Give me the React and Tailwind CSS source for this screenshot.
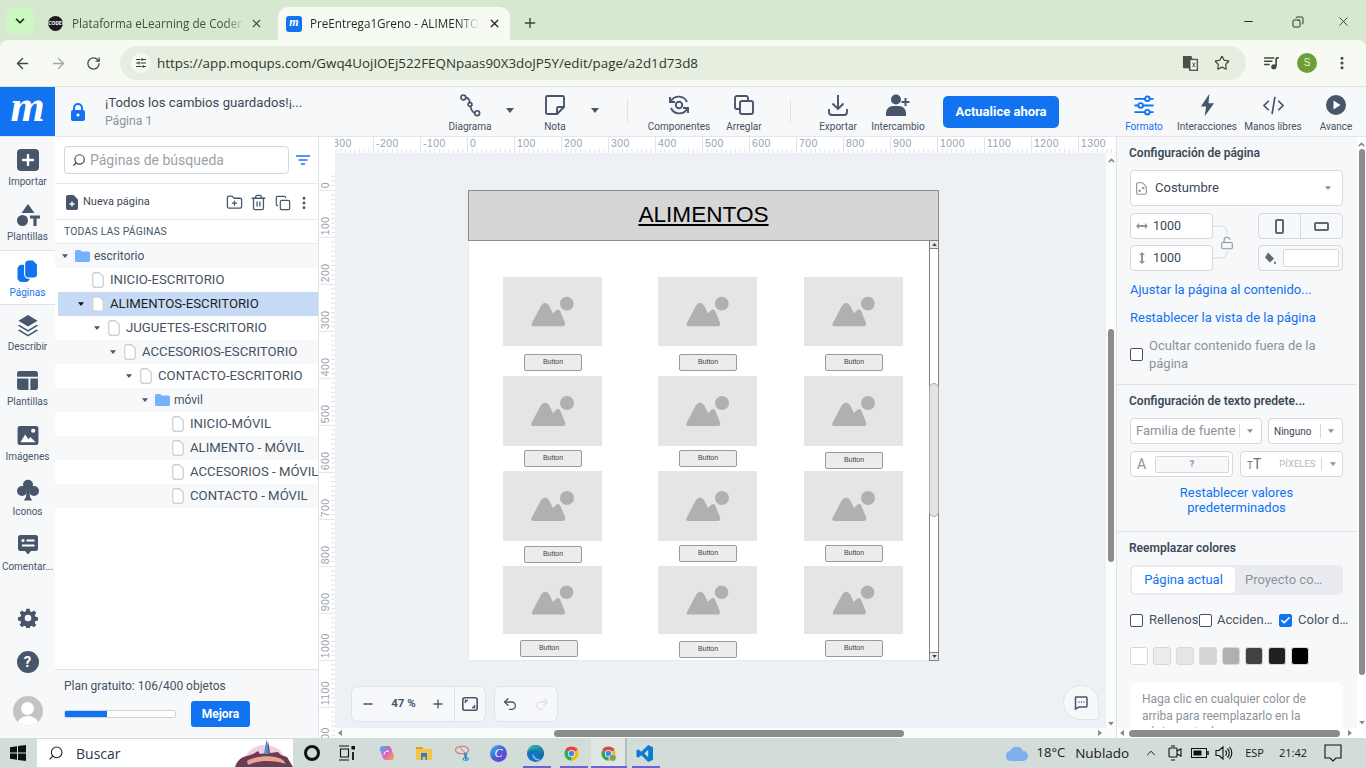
import React from 'react';
import { X, Plus, ArrowLeft, ArrowRight, RotateCw, Star, Minus, MoreVertical, ChevronDown, ChevronUp, Search, Trash2, Copy, FolderPlus, Undo2, Redo2, Check, SlidersHorizontal, LockOpen } from 'lucide-react';

const dark = '#47566a';

const Caret = ({ className = '', small }) => (
  <svg viewBox="0 0 8 5" className={`${small ? 'w-[6px] h-1' : 'w-2 h-[5px]'} ${className}`}><path d="M0 0h8L4 5z" fill="currentColor" /></svg>
);

const Mountains = () => (
  <svg viewBox="0 0 99 70" className="w-full h-full">
    <path d="M30 50q-3 0-1-4L38 29q4-5 8 0L50 37l3-3q2-2 4 0L62 46q1 4-2 4Z" fill="#b0b0b0" />
    <circle cx="64" cy="27" r="7" fill="#b0b0b0" />
  </svg>
);

const images = [
  [503, 277, 69], [658, 277, 69], [804, 277, 69],
  [503, 376, 70], [658, 376, 70], [804, 376, 70],
  [503, 471, 70], [658, 471, 70], [804, 471, 70],
  [503, 566, 68], [658, 566, 68], [804, 566, 68],
];
const buttons = [
  [524, 354], [679, 354], [825, 354],
  [524, 450], [679, 450], [825, 452],
  [524, 546], [679, 545], [825, 545],
  [520, 640], [679, 641], [825, 640],
];

const Wire = () => (
  <div className="relative w-[471px] h-[471px] ml-[133px] mt-[37px] bg-white shadow-[inset_0_0_0_1px_#e8eaee]">
    <div className="absolute left-0 top-0 w-[471px] h-[51px] bg-[#d6d6d6] border-y-[1.5px] border-x border-[#8c8c8c] flex items-center justify-center">
      <span className="text-[22.6px] leading-none text-black underline font-['Liberation_Sans',sans-serif]">ALIMENTOS</span>
    </div>
    {images.map(([x, y, h], i) => (
      <div key={i} className="absolute w-[99px] bg-[#e5e5e5]" style={{ left: x - 468, top: y - 190, height: h }}><Mountains /></div>
    ))}
    {buttons.map(([x, y], i) => (
      <div key={i} className="absolute w-[58px] h-[17px] bg-[#ececec] border-[1.5px] border-[#999] rounded-[2px] flex items-center justify-center text-[7px] text-[#444] font-['Liberation_Sans',sans-serif]" style={{ left: x - 468, top: y - 190 }}>Button</div>
    ))}
    <div className="absolute left-[461px] top-[50px] w-[10px] h-[421px] bg-white border-x-[1.5px] border-[#808080] flex flex-col items-center">
      <div className="w-[10px] h-[9px] bg-[#e9e9e9] border-[1.5px] border-[#808080] flex items-center justify-center shrink-0"><svg viewBox="0 0 6 4" className="w-[5px] h-[3px]"><path d="M3 0l3 4H0z" fill="#444" /></svg></div>
      <div className="w-[10px] h-[134px] mt-[134px] bg-[#e3e3e3] border border-[#aaa] rounded-[5px] shrink-0"></div>
      <div className="flex-1"></div>
      <div className="w-[10px] h-[9px] bg-[#e9e9e9] border-[1.5px] border-[#808080] flex items-center justify-center shrink-0"><svg viewBox="0 0 6 4" className="w-[5px] h-[3px]"><path d="M3 4L0 0h6z" fill="#444" /></svg></div>
    </div>
  </div>
);

const TopRuler = () => {
  const ticks = [];
  for (let u = -300; u <= 1400; u += 10) {
    const x = 132.6 + u * 0.47;
    if (u % 100 === 0) ticks.push(<path key={u} d={`M${x} 0V16`} stroke="#dfe3e8" />);
    else ticks.push(<path key={u} d={`M${x} 12V16`} stroke="#dfe3e8" />);
  }
  const labels = [];
  for (let u = -300; u <= 1300; u += 100) {
    labels.push(<text key={u} x={132.6 + u * 0.47 + 2.4} y="10" fontSize="10.5" letterSpacing="0.4" fill="#9aa3ad">{u}</text>);
  }
  return <svg width="781" height="16" className="block font-['Liberation_Sans',sans-serif]">{ticks}{labels}</svg>;
};

const LeftRuler = () => {
  const ticks = [];
  for (let u = -30; u <= 1300; u += 10) {
    const y = 37.3 + u * 0.47;
    if (u % 100 === 0) ticks.push(<path key={u} d={`M0 ${y}H16`} stroke="#dfe3e8" />);
    else ticks.push(<path key={u} d={`M12 ${y}H16`} stroke="#dfe3e8" />);
  }
  const labels = [];
  for (let u = 0; u <= 1200; u += 100) {
    const y = 37.3 + u * 0.47 - 2;
    labels.push(<text key={u} transform={`translate(10 ${y}) rotate(-90)`} fontSize="10.5" letterSpacing="0.4" fill="#9aa3ad">{u}</text>);
  }
  return <svg width="16" height="585" className="block font-['Liberation_Sans',sans-serif]">{ticks}{labels}</svg>;
};

const RailBtn = ({ label, active, children }) => (
  <div className={`w-[55px] h-[55px] flex flex-col items-center shrink-0 ${active ? 'bg-white border-y border-[#dfe3e8] w-[55px] relative z-10' : ''}`}>
    <div className="h-[30px] w-full flex items-center justify-center mt-[5px]">{children}</div>
    <span className={`text-[10px] leading-[13px] truncate w-[55px] text-center ${active ? 'text-[#1273f0]' : 'text-[#47566a]'}`}>{label}</span>
  </div>
);

const Rail = () => (
  <div className="w-[55px] shrink-0 bg-[#f6f8fa] border-r border-[#dfe3e8] flex flex-col pt-[3px] box-content -mr-px">
    <RailBtn label="Importar">
      <svg viewBox="0 0 22 22" className="w-[22px] h-[22px]"><rect width="22" height="22" rx="4" fill={dark} /><path d="M11 5v12M5 11h12" stroke="#fff" strokeWidth="2.4" /></svg>
    </RailBtn>
    <RailBtn label="Plantillas">
      <svg viewBox="0 0 24 24" className="w-6 h-6"><path d="M12 1l6.5 9h-13z" fill={dark} /><circle cx="6.5" cy="17.5" r="5.5" fill={dark} /><path d="M14 12.5h10v3h-3.4V23h-3.2v-7.5H14z" fill={dark} /></svg>
    </RailBtn>
    <RailBtn label="Páginas" active>
      <svg viewBox="0 0 22 24" className="w-[21px] h-[23px]"><rect x="0.5" y="5" width="13" height="18" rx="4.5" fill="#1273f0" /><path d="M8 4a4 4 0 0 1 4-4h5l4.5 4.5V15a4 4 0 0 1-4 4H12a4 4 0 0 1-4-4z" fill="#1273f0" stroke="#fff" strokeWidth="1.2" /></svg>
    </RailBtn>
    <RailBtn label="Describir">
      <svg viewBox="0 0 22 24" className="w-[22px] h-[23px]"><path d="M11 1l10 6-10 6L1 7z" fill={dark} /><path d="M2 11.2L11 16.6l9-5.4 1.5 1L11 18.5.5 12.2zM2 16.2L11 21.6l9-5.4 1.5 1L11 23.5.5 17.2z" fill={dark} /></svg>
    </RailBtn>
    <RailBtn label="Plantillas">
      <svg viewBox="0 0 22 20" className="w-[21px] h-[19px]"><path d="M2.5 0h17A2.5 2.5 0 0 1 22 2.5V6H0V2.5A2.5 2.5 0 0 1 2.5 0zM0 8h12v12H2.5A2.5 2.5 0 0 1 0 17.5zM14 8h8v9.5a2.5 2.5 0 0 1-2.5 2.5H14z" fill={dark} /></svg>
    </RailBtn>
    <RailBtn label="Imágenes">
      <svg viewBox="0 0 22 20" className="w-[22px] h-[19px]"><rect width="22" height="20" rx="2.5" fill={dark} /><circle cx="16.5" cy="5" r="2.2" fill="#fff" /><path d="M3 17l5-8 3.5 5 2-2.5L19 17z" fill="#fff" /></svg>
    </RailBtn>
    <RailBtn label="Iconos">
      <svg viewBox="0 0 22 22" className="w-[22px] h-[22px]"><circle cx="11" cy="5.8" r="5" fill={dark} /><circle cx="5" cy="12" r="5" fill={dark} /><circle cx="17" cy="12" r="5" fill={dark} /><path d="M9.8 10h2.4l.8 8 2.2 3.5H6.8L9 18z" fill={dark} /></svg>
    </RailBtn>
    <RailBtn label="Comentar...">
      <svg viewBox="0 0 20 20" className="w-5 h-5"><path d="M2.5 0h15A2.5 2.5 0 0 1 20 2.5v11a2.5 2.5 0 0 1-2.5 2.5H13l-3 3.5L7 16H2.5A2.5 2.5 0 0 1 0 13.5v-11A2.5 2.5 0 0 1 2.5 0z" fill={dark} /><circle cx="5" cy="5.5" r="1.6" fill="#fff" /><path d="M8.5 4.5h8v2h-8zM4 9.5h12.5v2H4z" fill="#fff" /></svg>
    </RailBtn>
    <div className="flex-1"></div>
    <div className="flex justify-center mb-[23px]">
      <svg viewBox="0 0 24 24" className="w-[20px] h-[20px]"><path fillRule="evenodd" d="M10 1h4l.6 3.1 1.9.8 2.7-1.8 2.8 2.8-1.8 2.6.8 2 3 .6v4l-3.1.6-.8 1.9 1.8 2.7-2.8 2.8-2.6-1.8-2 .8-.6 3h-4l-.6-3.1-1.9-.8-2.7 1.8-2.8-2.8 1.8-2.6-.8-2-3-.6v-4l3.1-.6.8-1.9-1.8-2.7 2.8-2.8 2.6 1.8 2-.8zM12 8a4 4 0 1 0 0 8 4 4 0 0 0 0-8z" fill={dark} /></svg>
    </div>
    <div className="flex justify-center mb-[23px]">
      <div className="w-[22px] h-[22px] rounded-full bg-[#47566a] text-white font-bold text-[15px] leading-[22px] text-center">?</div>
    </div>
    <div className="flex justify-center mb-[12px]">
      <div className="w-[30px] h-[30px] rounded-full bg-[#c4c4c4] overflow-hidden flex flex-col items-center">
        <div className="w-[13px] h-[13px] rounded-full bg-white mt-[6px] shrink-0"></div>
        <div className="w-[24px] h-[14px] rounded-t-[12px] bg-white mt-[1px] shrink-0"></div>
      </div>
    </div>
  </div>
);

const Doc = () => (
  <svg viewBox="0 0 12 16" className="w-3 h-4 shrink-0"><path d="M2 .75h5.5L11.25 4.5V13a2.2 2.2 0 0 1-2.2 2.25H2.9A2.2 2.2 0 0 1 .75 13V3A2.2 2.2 0 0 1 2 .75z" fill="#fff" stroke="#cdd1d6" strokeWidth="1.3" /></svg>
);
const Folder = () => (
  <svg viewBox="0 0 15 12" className="w-[15px] h-3 shrink-0"><path d="M0 1.5A1.5 1.5 0 0 1 1.5 0h3.7l1.6 1.6h6.7A1.5 1.5 0 0 1 15 3.1v7.4a1.5 1.5 0 0 1-1.5 1.5h-12A1.5 1.5 0 0 1 0 10.5z" fill="#74b3fb" /></svg>
);

const rows = [
  { t: 'escritorio', l: 0, f: true, c: true, g: true },
  { t: 'INICIO-ESCRITORIO', l: 1 },
  { t: 'ALIMENTOS-ESCRITORIO', l: 1, c: true, s: true },
  { t: 'JUGUETES-ESCRITORIO', l: 2, c: true },
  { t: 'ACCESORIOS-ESCRITORIO', l: 3, c: true, g: true },
  { t: 'CONTACTO-ESCRITORIO', l: 4, c: true },
  { t: 'móvil', l: 5, f: true, c: true, g: true },
  { t: 'INICIO-MÓVIL', l: 6 },
  { t: 'ALIMENTO - MÓVIL', l: 6, g: true },
  { t: 'ACCESORIOS - MÓVIL', l: 6 },
  { t: 'CONTACTO - MÓVIL', l: 6, g: true },
];

const Pages = () => (
  <div className="w-[264px] shrink-0 bg-white border-r border-[#dfe3e8] flex flex-col">
    <div className="h-[47px] shrink-0 border-b border-[#e6e9ed] flex items-center pl-[9px]">
      <div className="w-[225px] h-[28px] bg-white border border-[#d3d7dc] rounded-[4px] flex items-center pl-[7px]">
        <Search className="w-[14px] h-[14px] text-[#444] -scale-x-100" strokeWidth={2} />
        <span className="ml-[4px] text-[14px] text-[#9aa2ab]">Páginas de búsqueda</span>
      </div>
      <svg viewBox="0 0 14 10" className="w-[14px] h-[10px] ml-[7px]"><path d="M0 0h14v2H0zM2.5 4h9v2h-9zM5 8h4v2H5z" fill="#4f96f7" /></svg>
    </div>
    <div className="h-[36px] shrink-0 border-b border-[#e6e9ed] flex items-center pl-[11px] pr-[6px] pt-[2px]">
      <svg viewBox="0 0 12 15" className="w-3 h-[15px] shrink-0"><path d="M2 0h5.5L12 4.5V13a2 2 0 0 1-2 2H2a2 2 0 0 1-2-2V2a2 2 0 0 1 2-2z" fill={dark} /><path d="M6 6.5v5M3.5 9h5" stroke="#fff" strokeWidth="1.4" /></svg>
      <span className="ml-[5px] text-[11px] text-[#3c4857]">Nueva página</span>
      <div className="flex-1"></div>
      <FolderPlus className="w-[17px] h-[17px] text-[#47566a]" strokeWidth={1.8} />
      <Trash2 className="w-[17px] h-[17px] text-[#47566a] ml-[7px]" strokeWidth={1.8} />
      <Copy className="w-[16px] h-[16px] text-[#47566a] ml-[8px]" strokeWidth={1.8} />
      <MoreVertical className="w-[16px] h-[16px] text-[#47566a] ml-[5px]" strokeWidth={2.4} />
    </div>
    <div className="h-[24px] shrink-0 border-b border-[#e6e9ed] flex items-center pl-[9px] text-[10.4px] tracking-[0.2px] text-[#47566a]">TODAS LAS PÁGINAS</div>
    {rows.map((r) => (
      <div key={r.t} className={`h-[24px] shrink-0 flex items-center whitespace-nowrap ${r.f ? 'text-[12px]' : 'text-[13.2px]'} ${r.s ? 'bg-[#c6daf5] text-[#1a1f26] ml-[3px] mr-0' : r.g ? 'bg-[#f6f8fa] text-[#47525f]' : 'text-[#47525f]'}`} style={{ paddingLeft: (r.s ? 1 : 4) + r.l * 16 }}>
        <div className="w-3 flex justify-center shrink-0">{r.c && <Caret small className={r.s ? 'text-[#111]' : 'text-[#47566a]'} />}</div>
        <div className={r.f ? 'ml-[4px]' : 'ml-[5px]'}>{r.f ? <Folder /> : <Doc />}</div>
        <span className={r.f ? 'ml-[4px]' : 'ml-[6px]'}>{r.t}</span>
      </div>
    ))}
    <div className="flex-1"></div>
    <div className="h-[69px] shrink-0 bg-[#f6f8fa] border-t border-[#dfe3e8] pl-[9px] pt-[9px]">
      <div className="text-[12px] leading-[14px] text-[#47525f]">Plan gratuito: 106/400 objetos</div>
      <div className="flex items-center mt-[8px]">
        <div className="w-[112px] h-[8px] border border-[#cfd3d8] rounded-[2px] bg-white overflow-hidden"><div className="w-[42px] h-full bg-[#1273f0]"></div></div>
        <div className="ml-[15px] w-[59px] h-[26px] rounded-[3px] bg-[#1273f0] text-white text-[12px] font-bold flex items-center justify-center">Mejora</div>
      </div>
    </div>
  </div>
);

const Tool = ({ w, label, color = 'text-[#47525f]', children, cls = '' }) => (
  <div className={`flex flex-col items-center shrink-0 ${w} ${cls}`}>
    <div className="h-[26px] flex items-center justify-center mt-[5px]">{children}</div>
    <span className={`text-[10px] leading-[13px] mt-[2px] whitespace-nowrap ${color}`}>{label}</span>
  </div>
);

const Header = () => (
  <div className="h-[50px] shrink-0 bg-[#f6f8fa] border-b border-[#e3e6ea] flex items-stretch">
    <div className="w-[55px] bg-[#1273f0] flex items-center justify-center shrink-0">
      <span className="text-white text-[44px] leading-none font-bold italic font-['Liberation_Serif',serif] mt-[-9px]">m</span>
    </div>
    <div className="w-[385px] shrink-0 flex items-center">
      <svg viewBox="0 0 14 18" className="ml-[16px] w-[14px] h-[18px] shrink-0"><path d="M3 7V5a4 4 0 0 1 8 0v2" fill="none" stroke="#1273f0" strokeWidth="2" /><rect y="7" width="14" height="11" rx="2" fill="#1273f0" /><circle cx="7" cy="12" r="1.6" fill="#fff" /></svg>
      <div className="ml-[20px]">
        <div className="text-[13.2px] leading-[17px] text-[#3c4857]">¡Todos los cambios guardados!¡...</div>
        <div className="text-[12.2px] leading-[16px] mt-[2px] text-[#8b939c]">Página 1</div>
      </div>
    </div>
    <Tool w="w-[60px]" label="Diagrama">
      <svg viewBox="0 0 22 24" className="w-[21px] h-[23px]" fill="none" stroke={dark} strokeWidth="1.8"><circle cx="3.5" cy="3.5" r="2.5" /><circle cx="18" cy="20" r="2.5" /><circle cx="10.5" cy="11" r="2" /><path d="M6 3.5c3 .5 4 3 4.5 5.5M11 13c.5 3 2 6 4.5 7" /></svg>
    </Tool>
    <div className="w-[20px] flex items-center justify-center shrink-0 mb-[2px]"><Caret className="text-[#47566a]" /></div>
    <Tool w="w-[60px] ml-[5px]" label="Nota">
      <svg viewBox="0 0 20 20" className="w-5 h-5" fill="none" stroke={dark} strokeWidth="1.9"><path d="M2.5 1h15A1.5 1.5 0 0 1 19 2.5V12l-7 7H2.5A1.5 1.5 0 0 1 1 17.5v-15A1.5 1.5 0 0 1 2.5 1zM19 12h-5.5a1.5 1.5 0 0 0-1.5 1.5V19" /></svg>
    </Tool>
    <div className="w-[20px] flex items-center justify-center shrink-0 mb-[2px]"><Caret className="text-[#47566a]" /></div>
    <div className="w-px h-[24px] self-center ml-[22px] bg-[#dfe3e8] mb-[2px] shrink-0"></div>
    <Tool w="w-[70px] ml-[16px]" label="Componentes">
      <svg viewBox="0 0 22 22" className="w-[22px] h-[22px]" fill="none" stroke={dark} strokeWidth="1.9"><path d="M3 7a9 9 0 0 1 16 1M19 15a9 9 0 0 1-16-1" /><path d="M2 3v5h5M20 19v-5h-5" /><circle cx="11" cy="11" r="3.2" /></svg>
    </Tool>
    <Tool w="w-[60px]" label="Arreglar">
      <svg viewBox="0 0 20 20" className="w-5 h-5" fill="none" stroke={dark} strokeWidth="1.9"><path d="M14 6V3a2 2 0 0 0-2-2H3a2 2 0 0 0-2 2v9a2 2 0 0 0 2 2h3" /><rect x="6" y="6" width="13" height="13" rx="2" /></svg>
    </Tool>
    <div className="w-px h-[24px] self-center ml-[16px] bg-[#dfe3e8] mb-[2px] shrink-0"></div>
    <Tool w="w-[60px] ml-[17px]" label="Exportar">
      <svg viewBox="0 0 22 22" className="w-[22px] h-[22px]" fill="none" stroke={dark} strokeWidth="1.9"><path d="M11 1v14M5.5 9.5L11 15l5.5-5.5M2 15v3a3 3 0 0 0 3 3h12a3 3 0 0 0 3-3v-3" /></svg>
    </Tool>
    <Tool w="w-[60px]" label="Intercambio">
      <svg viewBox="0 0 24 22" className="w-6 h-[22px]"><circle cx="10" cy="5.5" r="5" fill={dark} /><path d="M0 22v-3a7 7 0 0 1 7-7h6a7 7 0 0 1 7 7v3z" fill={dark} /><path d="M19.5 4v8M15.5 8h8" stroke={dark} strokeWidth="2" /></svg>
    </Tool>
    <div className="ml-[15px] w-[116px] h-[32px] self-center bg-[#1273f0] rounded-[5px] text-white text-[13px] font-bold flex items-center justify-center shrink-0">Actualice ahora</div>
    <Tool w="w-[60px] ml-[55px]" label="Formato" color="text-[#1273f0]">
      <svg viewBox="0 0 20 22" className="w-5 h-[21px]" fill="none" stroke="#1273f0" strokeWidth="1.9"><path d="M0 4h11M16 4h4M0 11h4M9 11h11M0 18h11M16 18h4" /><circle cx="13.5" cy="4" r="2.4" /><circle cx="6.5" cy="11" r="2.4" /><circle cx="13.5" cy="18" r="2.4" /></svg>
    </Tool>
    <Tool w="w-[66px]" label="Interacciones">
      <svg viewBox="0 0 16 24" className="w-[15px] h-6"><path d="M10 0L1 13.5h5.5L5 24l10-14H9z" fill={dark} /></svg>
    </Tool>
    <Tool w="w-[66px]" label="Manos libres">
      <svg viewBox="0 0 22 20" className="w-[21px] h-[19px]" fill="none" stroke={dark} strokeWidth="1.8"><path d="M6 5l-5 5 5 5M16 5l5 5-5 5M12.5 1L9.5 19" /></svg>
    </Tool>
    <Tool w="w-[60px]" label="Avance">
      <svg viewBox="0 0 20 20" className="w-5 h-5"><circle cx="10" cy="10" r="10" fill={dark} /><path d="M7.5 5.5L14.5 10l-7 4.5z" fill="#fff" /></svg>
    </Tool>
  </div>
);

const Chrome = () => (
  <div className="bg-[#d7e8d1] shrink-0 font-['Open_Sans',sans-serif]">
    <div className="h-[40px] flex items-end">
      <div className="ml-[6px] mb-[6px] w-[28px] h-[27px] rounded-[8px] bg-[#ccf7c0] flex items-center justify-center shrink-0">
        <ChevronDown className="w-[14px] h-[14px] text-[#1d2b1a]" strokeWidth={3} />
      </div>
      <div className="w-[244px] h-[33px] shrink-0 flex items-center pl-[14px]">
        <div className="w-[15px] h-[15px] rounded-full bg-[#1a1a1a] text-white text-[5px] leading-[15px] text-center font-bold overflow-hidden shrink-0">CODER</div>
        <span className="ml-[9px] w-[173px] shrink-0 text-[11.7px] text-[#44503f] whitespace-nowrap [mask-image:linear-gradient(to_right,#000_88%,transparent)]">Plataforma eLearning de Coder</span>
        <X className="w-[13px] h-[13px] ml-[5px] text-[#444]" strokeWidth={2} />
      </div>
      <div className="w-[232px] h-[33px] bg-[#f6faf2] rounded-t-[10px] flex items-center pl-[8px] shrink-0">
        <div className="w-[16px] h-[16px] rounded-[3px] bg-[#1273f0] text-white text-[12px] leading-[13px] text-center italic font-bold font-['Liberation_Serif',serif] shrink-0">m</div>
        <span className="ml-[8px] w-[169px] shrink-0 text-[11.7px] text-[#1f2a1c] whitespace-nowrap [mask-image:linear-gradient(to_right,#000_88%,transparent)]">PreEntrega1Greno - ALIMENTOS</span>
        <X className="w-[13px] h-[13px] ml-[9px] text-[#222]" strokeWidth={2.4} />
      </div>
      <Plus className="ml-[12px] mb-[9px] w-[16px] h-[16px] text-[#3a4536] shrink-0" strokeWidth={2} />
      <div className="flex-1"></div>
      <div className="flex items-center mb-[11px] text-[#222] shrink-0">
        <Minus className="w-[13px] h-[13px] mr-[37px]" strokeWidth={1.8} />
        <Copy className="w-[12px] h-[12px] mr-[32px] -scale-x-100" strokeWidth={1.8} />
        <X className="w-[15px] h-[15px] mr-[15px]" strokeWidth={1.3} />
      </div>
    </div>
    <div className="h-[47px] bg-[#f6faf2] rounded-t-[8px] border-b border-[#dfe5da] flex items-center">
      <ArrowLeft className="ml-[14px] w-[17px] h-[17px] text-[#3f4a3b] shrink-0" strokeWidth={2} />
      <ArrowRight className="ml-[19px] w-[17px] h-[17px] text-[#a3ab9f] shrink-0" strokeWidth={2} />
      <RotateCw className="ml-[19px] w-[15px] h-[15px] text-[#3f4a3b] shrink-0" strokeWidth={2} />
      <div className="ml-[19px] w-[1126px] h-[34px] rounded-full bg-[#e6eee0] flex items-center shrink-0">
        <div className="ml-[11px] w-[20px] h-[20px] rounded-full bg-[#f6faf2] flex items-center justify-center shrink-0">
          <SlidersHorizontal className="w-[12px] h-[12px] text-[#333]" strokeWidth={2} />
        </div>
        <span className="ml-[6px] text-[13.37px] text-[#2c3729] whitespace-nowrap">https://app.moqups.com/Gwq4UojIOEj522FEQNpaas90X3doJP5Y/edit/page/a2d1d73d8</span>
        <div className="flex-1"></div>
        <svg viewBox="0 0 18 18" className="w-[17px] h-[17px] shrink-0"><path d="M1 1h9l1 3h5a1 1 0 0 1 1 1v12H8l-1-3H2a1 1 0 0 1-1-1z" fill="#4a5247" /><rect x="8.5" y="5" width="7.5" height="11" fill="#f6faf2" stroke="#4a5247" /><path d="M11 8l3 5M14 8l-3 5" stroke="#4a5247" strokeWidth="1" /></svg>
        <Star className="ml-[15px] mr-[16px] w-[16px] h-[16px] text-[#3f4a3b] shrink-0" strokeWidth={1.8} />
      </div>
      <svg viewBox="0 0 16 14" className="ml-[18px] w-[15px] h-[13px] shrink-0"><path d="M0 1h11M0 4.5h9M0 8h6" stroke="#3f4a3b" strokeWidth="1.6" /><path d="M13 1v9" stroke="#3f4a3b" strokeWidth="1.8" /><path d="M13 1h3" stroke="#3f4a3b" strokeWidth="1.8" /><circle cx="10.5" cy="10.5" r="2.8" fill="#3f4a3b" /></svg>
      <div className="ml-[18px] w-[20px] h-[20px] rounded-full bg-[#6e9e37] text-[#e6f0d8] text-[10px] leading-[20px] text-center font-['Liberation_Sans',sans-serif] shrink-0">S</div>
      <MoreVertical className="ml-[17px] w-[16px] h-[16px] text-[#3f4a3b] shrink-0" strokeWidth={2.6} />
    </div>
  </div>
);

const Input = ({ icon, cls = '' }) => (
  <div className={`w-[83px] h-[26px] bg-white border border-[#d5d9de] rounded-[4px] flex items-center text-[12.5px] text-[#3c4857] ${cls}`}>
    <div className="w-[22px] flex justify-center shrink-0">{icon}</div>1000
  </div>
);

const CB = ({ on }) => (
  <div className={`w-[13px] h-[13px] rounded-[2px] border shrink-0 flex items-center justify-center ${on ? 'bg-[#1273f0] border-[#1273f0]' : 'bg-white border-[#47525f]'}`}>
    {on && <Check className="w-[11px] h-[11px] text-white" strokeWidth={3.5} />}
  </div>
);

const swatches = ['bg-white', 'bg-[#ececec]', 'bg-[#e5e5e5]', 'bg-[#d6d6d6]', 'bg-[#b0b0b0]', 'bg-[#424242]', 'bg-[#212121]', 'bg-black'];

const Right = () => (
  <div className="w-[250px] shrink-0 border-l border-[#dfe3e8] flex flex-col bg-[#fbfcfc]">
    <div className="flex-1 flex min-h-0">
      <div className="w-[240px] bg-[#f6f8fa] overflow-hidden">
        <div className="pl-[13px] pr-[14px] pt-[7px] pb-[11px] border-b border-[#dfe3e8] h-[248px]">
          <div className="h-[18px] leading-[18px] text-[12px] font-semibold text-[#3c4857] -ml-px">Configuración de página</div>
          <div className="mt-[8px] h-[36px] bg-white border border-[#d5d9de] rounded-[4px] flex items-center pl-[5px] pr-[11px] text-[13px] text-[#3c4857]">
            <svg viewBox="0 0 12 14" className="w-[11px] h-[13px] shrink-0" fill="none" stroke="#8b939c" strokeWidth="1.2"><path d="M2 .7h5L11.3 5v7a1.3 1.3 0 0 1-1.3 1.3H2A1.3 1.3 0 0 1 .7 12V2A1.3 1.3 0 0 1 2 .7z" /><circle cx="4" cy="9.5" r=".8" fill="#8b939c" /><circle cx="8" cy="6.5" r=".8" fill="#8b939c" /></svg>
            <span className="ml-[8px]">Costumbre</span>
            <div className="flex-1"></div>
            <Caret small className="text-[#8b939c]" />
          </div>
          <div className="mt-[7px] flex">
            <div className="flex flex-col gap-[6px]">
              <Input icon={<svg viewBox="0 0 12 6" className="w-3 h-[6px]"><path d="M0 3l3-3v2h6V0l3 3-3 3V4H3v2z" fill="#8b939c" /></svg>} />
              <Input icon={<svg viewBox="0 0 6 12" className="w-[6px] h-3"><path d="M3 0l3 3H4v6h2l-3 3-3-3h2V3H0z" fill="#8b939c" /></svg>} />
            </div>
            <div className="w-[45px] relative">
              <svg viewBox="0 0 45 58" className="absolute inset-0 w-[45px] h-[58px]" fill="none" stroke="#d5d9de"><path d="M0 13h8a6 6 0 0 1 6 6v3M0 45h8a6 6 0 0 0 6-6v-1" /></svg>
              <LockOpen className="absolute left-[7px] top-[23px] w-[14px] h-[14px] text-[#8b939c]" strokeWidth={1.8} />
            </div>
            <div className="w-[85px] flex flex-col gap-[6px]">
              <div className="h-[26px] border border-[#d5d9de] rounded-[4px] bg-[#f6f8fa] flex items-center">
                <div className="w-[42px] h-full border-r border-[#d5d9de] flex items-center justify-center"><div className="w-[9px] h-[15px] border-2 border-[#5b6876] rounded-[2px]"></div></div>
                <div className="flex-1 flex items-center justify-center"><div className="w-[15px] h-[9px] border-2 border-[#5b6876] rounded-[2px]"></div></div>
              </div>
              <div className="h-[26px] border border-[#d5d9de] rounded-[4px] flex items-center pl-[5px]">
                <svg viewBox="0 0 12 12" className="w-3 h-3 shrink-0"><path d="M4 .5L10 6.5l-4 4-5-5zM11 9c.6 1 1 1.5 1 2a1 1 0 0 1-2 0c0-.5.4-1 1-2z" fill="#5b6876" /></svg>
                <div className="ml-[7px] w-[56px] h-[18px] bg-white border border-[#d5d9de] rounded-[2px]"></div>
              </div>
            </div>
          </div>
          <div className="mt-[9px] h-[20px] leading-[20px] text-[13px] text-[#1273f0] whitespace-nowrap">Ajustar la página al contenido...</div>
          <div className="mt-[8px] h-[20px] leading-[20px] text-[13px] text-[#1273f0] whitespace-nowrap">Restablecer la vista de la página</div>
          <div className="mt-[9px] flex items-start">
            <div className="mt-[11px]"><CB /></div>
            <div className="ml-[6px] text-[13px] leading-[18px] text-[#8b939c]">Ocultar contenido fuera de la página</div>
          </div>
        </div>
        <div className="pl-[13px] pr-[14px] pt-[7px] border-b border-[#dfe3e8] h-[147px]">
          <div className="h-[18px] leading-[18px] text-[12px] font-semibold text-[#3c4857] -ml-px">Configuración de texto predete...</div>
          <div className="mt-[8px] flex gap-[6px]">
            <div className="w-[132px] h-[26px] bg-white border border-[#d5d9de] rounded-[4px] flex items-center pl-[5px] text-[13px] text-[#8b939c]">
              <span className="whitespace-nowrap">Familia de fuente</span><div className="ml-[3px] w-px h-[14px] bg-[#d5d9de]"></div><Caret small className="ml-[7px] text-[#8b939c]" />
            </div>
            <div className="w-[75px] h-[26px] bg-white border border-[#d5d9de] rounded-[4px] flex items-center pl-[5px] text-[10px] text-[#3c4857]">
              Ninguno<div className="ml-[9px] w-px h-[14px] bg-[#d5d9de]"></div><Caret small className="ml-[7px] text-[#8b939c]" />
            </div>
          </div>
          <div className="mt-[7px] flex gap-[7px]">
            <div className="w-[103px] h-[26px] bg-white border border-[#d5d9de] rounded-[4px] flex items-center pl-[6px] text-[#8b939c]">
              <span className="text-[14px] w-[17px]">A</span>
              <div className="ml-[1px] w-[74px] h-[17px] bg-[#f6f8fa] border border-[#d5d9de] rounded-[2px] text-[9px] font-bold text-center leading-[15px]">?</div>
            </div>
            <div className="w-[103px] h-[26px] bg-white border border-[#d5d9de] rounded-[4px] flex items-center pl-[6px] text-[#6b7580]">
              <span className="text-[14px] leading-none whitespace-nowrap"><span className="text-[10px]">T</span>T</span>
              <span className="ml-[18px] text-[9.5px] text-[#b3b8be]">PÍXELES</span><div className="ml-[5px] w-px h-[14px] bg-[#d5d9de]"></div><Caret small className="ml-[8px] text-[#8b939c]" />
            </div>
          </div>
          <div className="mt-[8px] text-center text-[13px] leading-[15px] text-[#1273f0]">Restablecer valores<br />predeterminados</div>
        </div>
        <div className="pl-[13px] pt-[7px]">
          <div className="h-[18px] leading-[18px] text-[12px] font-semibold text-[#3c4857] -ml-px">Reemplazar colores</div>
          <div className="mt-[8px] w-[213px] h-[30px] bg-[#e9ebf0] rounded-[5px] flex items-center p-[2px]">
            <div className="w-[103px] h-[26px] bg-white rounded-[4px] text-[13px] text-[#1273f0] flex items-center justify-center shrink-0">Página actual</div>
            <div className="ml-[10px] w-[84px] truncate text-[13px] text-[#8b939c]">Proyecto completo</div>
          </div>
          <div className="mt-[16px] w-[227px] h-[18px] flex items-center text-[13px] text-[#47525f] whitespace-nowrap">
            <CB /><span className="ml-[6px] w-[50px] shrink-0">Rellenos</span>
            <CB /><span className="ml-[5px] w-[58px] shrink-0 truncate">Accidentales</span>
            <div className="ml-[4px]"><CB on /></div><span className="ml-[6px] w-[53px] shrink-0 truncate">Color de texto</span>
          </div>
          <div className="mt-[18px] flex gap-[5px]">
            {swatches.map((s) => <div key={s} className={`w-[18px] h-[18px] rounded-[3px] border border-[#d5d9de] ${s}`}></div>)}
          </div>
          <div className="mt-[17px] w-[213px] h-[80px] bg-white rounded-[7px] px-[12px] pt-[9px] text-[12px] leading-[16.5px] text-[#8b939c]">Haga clic en cualquier color de arriba para reemplazarlo en la página actual.</div>
        </div>
      </div>
      <div className="w-[9px] bg-white flex flex-col items-center pt-[3px]">
        <ChevronUp className="w-[9px] h-[9px] text-[#8a8a8a] shrink-0" strokeWidth={4} />
        <div className="w-[6px] h-[526px] mt-[0px] rounded-full bg-[#8c8c8c] shrink-0"></div>
        <div className="flex-1"></div>
        <Caret className="text-[#8a8a8a] mb-[3px] scale-75" />
      </div>
    </div>
    <div className="h-[10px] bg-white flex items-center shrink-0">
      <svg viewBox="0 0 4 6" className="ml-[3px] w-1 h-[6px]"><path d="M4 0v6L0 3z" fill="#8a8a8a" /></svg>
      <div className="ml-[5px] w-[211px] h-[7px] rounded-full bg-[#8c8c8c]"></div>
      <svg viewBox="0 0 4 6" className="ml-[8px] w-1 h-[6px]"><path d="M0 0v6l4-3z" fill="#8a8a8a" /></svg>
    </div>
  </div>
);

const Center = () => (
  <div className="flex-1 min-w-0 flex flex-col">
    <div className="h-[16px] shrink-0 bg-white flex">
      <div className="w-[16px] shrink-0"></div>
      <TopRuler />
    </div>
    <div className="flex-1 flex min-h-0">
      <div className="w-[16px] shrink-0 bg-white overflow-hidden"><LeftRuler /></div>
      <div className="flex-1 flex flex-col min-w-0">
        <div className="flex-1 flex min-h-0">
          <div className="flex-1 relative bg-[#edf0f5] overflow-hidden">
            <Wire />
            <div className="absolute left-[16px] top-[533px] flex gap-[8px] text-[#47566a]">
              <div className="w-[135px] h-[36px] bg-[#f6f8fa] border border-[#e0e3e8] rounded-[7px] flex items-center">
                <Minus className="ml-[9px] w-[14px] h-[14px]" strokeWidth={2.2} />
                <span className="w-[55px] ml-[1px] text-center text-[11.5px] font-bold">47 %</span>
                <Plus className="w-[14px] h-[14px]" strokeWidth={2.2} />
                <div className="ml-[9px] w-px h-full bg-[#e0e3e8]"></div>
                <svg viewBox="0 0 16 14" className="ml-[7px] w-[16px] h-[14px]" fill="none" stroke="#47566a" strokeWidth="1.6"><rect x=".8" y=".8" width="14.4" height="12.4" rx="2" /><path d="M3.5 6V3.5H6M12.5 8v2.5H10" /></svg>
              </div>
              <div className="w-[64px] h-[36px] bg-[#f6f8fa] border border-[#e0e3e8] rounded-[7px] flex items-center">
                <Undo2 className="ml-[7px] w-[16px] h-[16px]" strokeWidth={2} />
                <Redo2 className="ml-[16px] w-[16px] h-[16px] text-[#dfe3e8]" strokeWidth={2} />
              </div>
            </div>
            <div className="absolute left-[728px] top-[532px] w-[36px] h-[35px] bg-[#f6f8fa] border border-[#e0e3e8] rounded-t-[18px] rounded-bl-[18px] rounded-br-[2px] flex items-center justify-center">
              <svg viewBox="0 0 14 14" className="w-[14px] h-[14px]" fill="none" stroke="#47566a" strokeWidth="1.5"><path d="M2 1h10a1 1 0 0 1 1 1v8a1 1 0 0 1-1 1H5l-3.5 2V2A1 1 0 0 1 2 1z" /><path d="M4.5 6h1M7 6h1M9.5 6h1" /></svg>
            </div>
          </div>
          <div className="w-[10px] shrink-0 bg-[#fbfcfc] flex flex-col items-center pt-[3px]">
            <ChevronUp className="w-[9px] h-[9px] text-[#8a8a8a] shrink-0" strokeWidth={4} />
            <div className="w-[6px] h-[233px] mt-[164px] rounded-full bg-[#8c8c8c] shrink-0"></div>
            <div className="flex-1"></div>
            <Caret className="text-[#8a8a8a] mb-[2px] scale-75" />
          </div>
        </div>
        <div className="h-[10px] shrink-0 bg-[#fbfcfc] flex items-center">
          <svg viewBox="0 0 4 6" className="ml-[3px] w-1 h-[6px]"><path d="M4 0v6L0 3z" fill="#8a8a8a" /></svg>
          <div className="ml-[212px] w-[350px] h-[7px] rounded-full bg-[#8c8c8c]"></div>
          <svg viewBox="0 0 4 6" className="ml-[194px] w-1 h-[6px]"><path d="M0 0v6l4-3z" fill="#8a8a8a" /></svg>
        </div>
      </div>
    </div>
  </div>
);

const ChromeLogo = ({ badge }) => (
  <svg viewBox="0 0 48 48" className="w-[17px] h-[17px] shrink-0">
    <path d="M24 24L6.7 14A20 20 0 0 1 41.3 14Z" fill="#ea4335" />
    <path d="M24 24L41.3 14A20 20 0 0 1 24 44Z" fill="#fbbc04" />
    <path d="M24 24L24 44A20 20 0 0 1 6.7 14Z" fill="#34a853" />
    <circle cx="24" cy="24" r="10" fill="#fff" />
    <circle cx="24" cy="24" r="8" fill="#4285f4" />
    {badge && <circle cx="36" cy="36" r="10" fill="#7da05a" stroke="#dde3e0" strokeWidth="2" />}
  </svg>
);

const Taskbar = () => (
  <div className="h-[30px] shrink-0 bg-[#d2dcd9] flex items-center font-['Open_Sans',sans-serif]">
    <svg viewBox="0 0 16 16" className="ml-[10px] w-[16px] h-[16px] shrink-0"><path d="M0 2.2l7-1V7.5H0zM8 1l8-1v7.5H8zM0 8.5h7v6.3l-7-1zM8 8.5h8V16l-8-1.1z" fill="#111" /></svg>
    <div className="ml-[11px] w-[256px] h-[28px] bg-white flex items-center relative shrink-0 overflow-hidden">
      <Search className="ml-[11px] w-[16px] h-[16px] text-[#222] -scale-x-100" strokeWidth={1.6} />
      <span className="ml-[12px] text-[14px] text-[#2b3a4a]">Buscar</span>
      <svg viewBox="0 0 60 28" className="absolute right-0 top-0 w-[60px] h-[28px]">
        <ellipse cx="32" cy="22" rx="20" ry="16" fill="#f0cfe0" />
        <path d="M2 28C6 16 14 18 20 15l5-3 2 3 6-1 2-12 2 12 8-1 3 3 6 2 6 10z" fill="#6e3b55" />
        <path d="M14 22c10-6 28-6 36-1l3 4c-12-4-28-4-38 1z" fill="#e8a590" />
        <path d="M33.5 0l2.5 15h-5z" fill="#4a90d9" />
      </svg>
    </div>
    <div className="ml-[11px] w-[16px] h-[16px] rounded-full border-[3px] border-[#111] shrink-0"></div>
    <svg viewBox="0 0 16 16" className="ml-[19px] w-[16px] h-[16px] shrink-0" fill="none" stroke="#111" strokeWidth="1.1"><path d="M0 1h10M0 15h10M1.5 4h8v8h-8z" /><path d="M13 1.5h2.5v2.5H13z" fill="#111" /><path d="M14 7v8" strokeWidth="1.8" /></svg>
    <svg viewBox="0 0 16 16" className="ml-[24px] w-[16px] h-[16px] shrink-0"><defs><linearGradient id="cp" x1="0" y1="0" x2="1" y2="1"><stop offset="0" stopColor="#3fb5e8" /><stop offset=".5" stopColor="#d85fc4" /><stop offset="1" stopColor="#f7b33c" /></linearGradient></defs><path d="M4 1h5a3 3 0 0 1 3 2l3 8a3 3 0 0 1-3 4H7a3 3 0 0 1-3-2L1 5a3 3 0 0 1 3-4z" fill="url(#cp)" /><path d="M5 10c0-3 2-4 5-4" stroke="#fff" strokeWidth="1" fill="none" /></svg>
    <svg viewBox="0 0 16 14" className="ml-[21px] w-[16px] h-[14px] shrink-0"><path d="M0 1h6l1.5 2H16v11H0z" fill="#f4c54a" /><path d="M0 1h6l1.5 2H0z" fill="#d9a021" /><path d="M5 7h6v7H9.5v-3h-3v3H5z" fill="#2f7ccf" /></svg>
    <svg viewBox="0 0 16 16" className="ml-[23px] w-[16px] h-[16px] shrink-0" fill="none"><ellipse cx="7" cy="5" rx="6.5" ry="3.8" stroke="#e07070" strokeWidth="1.1" /><path d="M5 2l5 6" stroke="#e07070" /><path d="M9 8c1 2 1 3 1.5 5M12 8c-1 2-1 3-1.5 5" stroke="#2a86c8" strokeWidth="1.4" /><circle cx="9.5" cy="14" r="1.4" stroke="#2a86c8" /><circle cx="12" cy="14" r="1.4" stroke="#2a86c8" /></svg>
    <div className="ml-[19px] w-[17px] h-[17px] rounded-full bg-gradient-to-br from-[#23c4d8] via-[#4a5bd8] to-[#7a2fd0] text-white text-[12px] leading-[16px] text-center italic font-['Liberation_Serif',serif] shrink-0">C</div>
    <div className="ml-[20px] relative w-[17px] h-[30px] flex items-center shrink-0">
      <svg viewBox="0 0 16 16" className="w-[17px] h-[17px]"><defs><linearGradient id="ed" x1="0" y1="0" x2="1" y2="1"><stop offset="0" stopColor="#36c9a0" /><stop offset="1" stopColor="#0c59a4" /></linearGradient></defs><circle cx="8" cy="8" r="8" fill="#1173c4" /><path d="M0 8a8 8 0 0 1 16 0c0 2-1.6 3-3.4 3-2 0-3-.6-3.4-1.4.8 0 2-.5 2-1.8C11.2 6 9.5 4.5 7 4.5 3.5 4.5 0 6 0 8z" fill="url(#ed)" /><path d="M5.5 8c-1 3 1 6 4.5 6.5 1 0 2-.4 3-1-3 .7-6-1.5-7.5-5.5z" fill="#d2dcd9" opacity=".7" /></svg>
      <div className="absolute left-[-4px] bottom-0 w-[28px] h-[2px] bg-[#6a63d2]"></div>
    </div>
    <div className="ml-[19px] relative w-[17px] h-[30px] flex items-center shrink-0">
      <ChromeLogo />
      <div className="absolute left-[-3px] bottom-0 w-[28px] h-[2px] bg-[#6a63d2]"></div>
    </div>
    <div className="ml-[11px] w-[36px] h-[30px] bg-[#dfe6e3] border-r-2 border-[#b8c0be] relative flex items-center justify-center shrink-0">
      <ChromeLogo badge />
      <div className="absolute left-0 bottom-0 w-[36px] h-[2px] bg-[#6a63d2]"></div>
    </div>
    <div className="ml-[9px] relative w-[17px] h-[30px] flex items-center shrink-0">
      <svg viewBox="0 0 16 16" className="w-[17px] h-[17px]"><path d="M11.5 0L16 2.2v11.6L11.5 16 5 9.7 2 12 .5 11V5L2 4l3 2.3zM11.5 4.4L7.8 8l3.7 3.6z" fill="#0a7cd2" fillRule="evenodd" /></svg>
      <div className="absolute left-[-4px] bottom-0 w-[28px] h-[2px] bg-[#6a63d2]"></div>
    </div>
    <div className="flex-1"></div>
    <svg viewBox="0 0 24 16" className="w-6 h-4 shrink-0"><path d="M6 16a5 5 0 0 1-1-9.9A7 7 0 0 1 18 6a5 5 0 0 1 0 10z" fill="#7fb0ee" /></svg>
    <span className="ml-[8px] text-[13px] text-[#1a1a1a] whitespace-nowrap">18°C</span>
    <span className="ml-[10px] text-[13.5px] text-[#1a1a1a] whitespace-nowrap">Nublado</span>
    <ChevronUp className="ml-[15px] w-[14px] h-[14px] text-[#111] shrink-0" strokeWidth={1.6} />
    <svg viewBox="0 0 14 16" className="ml-[10px] w-[14px] h-[16px] shrink-0" fill="none" stroke="#111" strokeWidth="1.1"><rect x="1" y="3" width="8" height="9" rx="1" /><path d="M9 6l4-2v7l-4-2M3 1h4M3 15h4" /></svg>
    <svg viewBox="0 0 18 10" className="ml-[9px] w-[18px] h-[10px] shrink-0" fill="none" stroke="#111"><rect x=".5" y=".5" width="15" height="9" /><rect x="3" y="3" width="7" height="4" fill="#111" /><path d="M17 3v4" strokeWidth="1.5" /></svg>
    <svg viewBox="0 0 18 16" className="ml-[6px] w-[18px] h-[16px] shrink-0" fill="none" stroke="#111" strokeWidth="1.1"><path d="M1 5.5h3L8 2v12l-4-3.5H1zM10.5 5.5a3.5 3.5 0 0 1 0 5M12.5 3.5a6.5 6.5 0 0 1 0 9M14.5 2a9 9 0 0 1 0 12" /></svg>
    <span className="ml-[12px] text-[11px] text-[#1a1a1a]">ESP</span>
    <span className="ml-[15px] text-[11px] text-[#1a1a1a]">21:42</span>
    <svg viewBox="0 0 18 18" className="ml-[17px] mr-[24px] w-[18px] h-[18px] shrink-0" fill="none" stroke="#111" strokeWidth="1.1"><path d="M1 1h16v13h-5l-3 3-3-3H1z" /></svg>
  </div>
);

export default function App() {
  return (
    <div className="w-[1366px] h-[768px] overflow-hidden flex flex-col font-['Roboto',sans-serif]">
      <Chrome />
      <Header />
      <div className="flex-1 flex min-h-0">
        <Rail />
        <Pages />
        <Center />
        <Right />
      </div>
      <Taskbar />
    </div>
  );
}
